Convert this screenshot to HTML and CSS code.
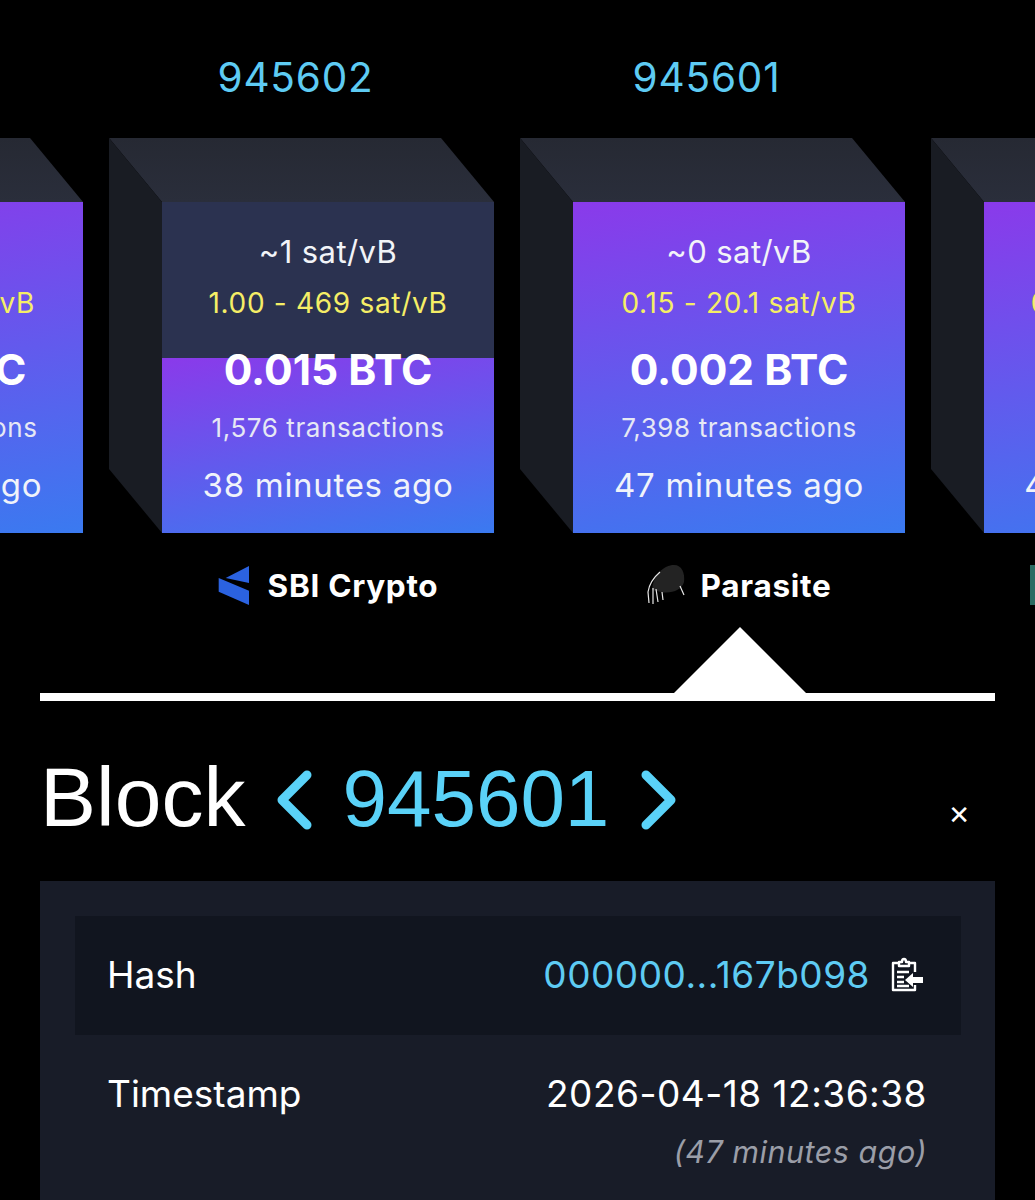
FILE: index.html
```html
<!DOCTYPE html>
<html lang="en">
<head>
<meta charset="utf-8">
<title>Block 945601</title>
<link rel="stylesheet" href="styles.css">
</head>
<body>
<div class="page">
  <section class="chain">
    <article class="block">
      <div class="height">945603</div>
      <div class="cube">
        <div class="face-top"></div><div class="face-side"></div>
        <div class="front fill-full">
          <div class="fee">~0 sat/vB</div>
          <div class="range">0.14 - 20.1 sat/vB</div>
          <div class="reward">0.002 BTC</div>
          <div class="txs">2,340 transactions</div>
          <div class="age">28 minutes ago</div>
        </div>
      </div>
      <div class="pool"></div>
    </article>
    <article class="block">
      <div class="height">945602</div>
      <div class="cube">
        <div class="face-top"></div><div class="face-side"></div>
        <div class="front fill-half">
          <div class="fee">~1 sat/vB</div>
          <div class="range">1.00 - 469 sat/vB</div>
          <div class="reward">0.015 BTC</div>
          <div class="txs">1,576 transactions</div>
          <div class="age">38 minutes ago</div>
        </div>
      </div>
      <div class="pool">
        <svg class="pool-logo" viewBox="219 565 32 40"><path fill="#2b62e0" d="M250 566 226.7 578 250 583Z"/><path fill="#2b62e0" d="M219.7 578 250 590.7V605L219.7 591.7Z"/></svg>
        <span>SBI Crypto</span>
      </div>
    </article>
    <article class="block">
      <div class="height">945601</div>
      <div class="cube">
        <div class="face-top"></div><div class="face-side"></div>
        <div class="front fill-full">
          <div class="fee">~0 sat/vB</div>
          <div class="range">0.15 - 20.1 sat/vB</div>
          <div class="reward">0.002 BTC</div>
          <div class="txs">7,398 transactions</div>
          <div class="age">47 minutes ago</div>
        </div>
      </div>
      <div class="pool">
        <svg class="pool-logo parasite" viewBox="648 565 38 40"><path fill="#232323" d="M653 590C654 575 665 565 675 565 683 565 686 573 685 582 683 590 672 594 662 592Z"/><path fill="none" stroke="#e8e8e8" stroke-width="1.2" d="M661 572C654 578 650 585 649 592L650 603M654 588 654 604M657 589 659 602M663 592 664 600M681 586 685 595"/></svg>
        <span>Parasite</span>
      </div>
    </article>
    <article class="block">
      <div class="height">945600</div>
      <div class="cube">
        <div class="face-top"></div><div class="face-side"></div>
        <div class="front fill-full">
          <div class="fee">~0 sat/vB</div>
          <div class="range">0.12 - 18.4 sat/vB</div>
          <div class="reward">0.003 BTC</div>
          <div class="txs">5,112 transactions</div>
          <div class="age">49 minutes ago</div>
        </div>
      </div>
      <div class="pool"><i class="pool-tile"></i></div>
    </article>
  </section>

  <div class="pointer"><div class="pointer-tri"></div></div>
  <div class="rule"></div>

  <header class="title">
    <h1>Block</h1>
    <svg class="chev" viewBox="0 0 36 60"><path d="M31 5 6 30 31 55"/></svg>
    <span class="title-num">945601</span>
    <svg class="chev" viewBox="0 0 36 60"><path d="M5 5 30 30 5 55"/></svg>
    <span class="close">✕</span>
  </header>

  <section class="panel">
    <div class="row row-hash">
      <span>Hash</span>
      <span class="hash"><span class="link">000000...167b098</span>
        <svg class="copy" viewBox="0 0 34 36"><path fill="none" stroke="#fff" stroke-width="2.4" stroke-linejoin="round" d="M9 6H3V33H25V28M19 6H25V15"/><path fill="none" stroke="#fff" stroke-width="2.4" stroke-linejoin="round" d="M9 8V5H12C12 1 16 1 16 5H19V9H9Z"/><path stroke="#fff" stroke-width="2.4" d="M7 15H19M7 20H14M7 25H14M7 29H19"/><path fill="#fff" d="M15 23 23 16V20H33V26H23V30Z"/></svg>
      </span>
    </div>
    <div class="row row-time">
      <span>Timestamp</span>
      <span class="time"><span>2026-04-18 12:36:38</span><em>(47 minutes ago)</em></span>
    </div>
  </section>
</div>
</body>
</html>
```
FILE: styles.css
```css
* { box-sizing: border-box; }
html, body { margin: 0; background: #000; }
body { font-family: Inter, "Liberation Sans", sans-serif; color: #fff; }
.page { height: 1200px; width: 1035px; overflow: hidden; display: flex; flex-direction: column; }

.chain { display: flex; flex: none; gap: 26px; margin-left: -302px; padding-top: 50px; width: 1800px; }
.block { width: 385px; flex: none; }
.height { height: 56px; line-height: 56px; font-size: 40.5px; color: #5ecbf3; text-align: center; padding-right: 12px; margin-bottom: 32px; letter-spacing: .8px; }

.cube { display: grid; grid-template-columns: 53px 332px; grid-template-rows: 64px 331px; }
.face-top { grid-column: 1 / 3; grid-row: 1; background: linear-gradient(180deg, #262933, #2a2e3b); clip-path: polygon(0 0, 332px 0, 385px 64px, 53px 64px); }
.face-side { grid-column: 1; grid-row: 1 / 3; background: #191c23; clip-path: polygon(0 0, 53px 64px, 53px 395px, 0 331px); }
.front { grid-column: 2; grid-row: 2; display: flex; flex-direction: column; align-items: center; padding-top: 28px; background-color: #2b3250; background-repeat: no-repeat; background-position: bottom; }
.fill-full { background-image: linear-gradient(170deg, #8a3aea 0%, #3a7af0 100%); }
.fill-half { background-image: linear-gradient(170deg, #8a3aea 0%, #3a7af0 100%); background-size: 100% 175px; }

.fee, .range, .txs, .age { line-height: 44px; height: 44px; white-space: nowrap; }
.fee { font-size: 31px; color: #f2f4f8; letter-spacing: .4px; }
.range { font-size: 28px; color: #f5ee66; margin-top: 7px; letter-spacing: .7px; }
.reward { font-size: 42.5px; font-weight: 700; line-height: 60px; height: 60px; margin-top: 15px; white-space: nowrap; }
.txs { font-size: 26px; color: #e6e8f4; margin-top: 6px; letter-spacing: .6px; }
.age { font-size: 33px; color: #f0f3fa; margin-top: 13px; letter-spacing: .7px; }

.pool { height: 40px; margin-top: 32px; padding-left: 53px; display: flex; align-items: center; justify-content: center; gap: 18px; font-size: 31.5px; font-weight: 700; letter-spacing: .7px; white-space: nowrap; }
.pool-logo { width: 32px; height: 40px; flex: none; }
.parasite { width: 38px; height: 40px; margin-right: -2px; }
.pool-tile { width: 32px; height: 40px; margin-right: 208px; background: #2b6b63; flex: none; }

.pointer { flex: none; margin-top: 22px; padding-left: 674px; height: 66px; }
.pointer-tri { width: 132px; height: 66px; background: #fff; clip-path: polygon(50% 0, 100% 100%, 0 100%); }
.rule { flex: none; height: 8px; margin: 0 40px; background: #fff; }

.title { flex: none; height: 180px; padding: 12px 40px 0; display: flex; align-items: center; }
.title h1 { margin: 0; font: 400 84px/1 "Liberation Sans", sans-serif; }
.chev { width: 36px; height: 60px; flex: none; margin-left: 31px; margin-top: 5px; fill: none; stroke: #5ad2f8; stroke-width: 9; stroke-linecap: round; stroke-linejoin: round; }
.title-num { font: 400 80px/1 "Liberation Sans", sans-serif; color: #5ad2f8; margin-left: 30px; margin-top: 3px; }
.title-num + .chev { margin-left: 32px; }
.close { margin-left: auto; margin-right: 25px; margin-top: 36px; font-size: 26px; line-height: 1; font-family: "DejaVu Sans", sans-serif; }

.panel { flex: 1; min-height: 0; margin: 0 40px; background: #181c28; padding: 35px 34px 35px 35px; }
.row { display: flex; justify-content: space-between; font-size: 37px; padding: 0 34px 0 32px; }
.row-hash { height: 119px; align-items: center; background: #11151f; padding-bottom: 2px; }
.hash { display: flex; align-items: center; gap: 20px; }
.link { color: #5ecbf3; letter-spacing: .5px; }
.copy { width: 34px; height: 36px; margin-right: 3px; }
.row-time { padding-top: 36px; line-height: 46px; }
.time { display: flex; flex-direction: column; align-items: flex-end; letter-spacing: .5px; }
.time em { font-size: 30.5px; color: #9b9ea8; margin-top: 12px; letter-spacing: .5px; }
```
